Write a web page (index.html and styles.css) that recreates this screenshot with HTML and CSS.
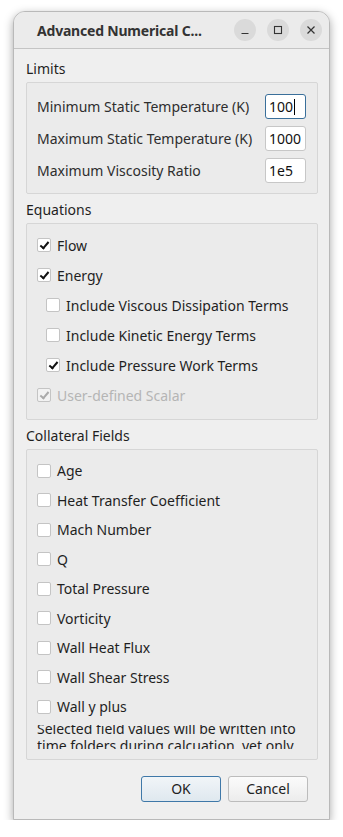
FILE: index.html
```html
<!DOCTYPE html>
<html lang="en">
<head>
    <meta charset="UTF-8">
    <meta name="viewport" content="width=device-width, initial-scale=1.0">
    <title>Advanced Numerical Controls</title>
    <link rel="stylesheet" href="styles.css">
</head>
<body>

<div class="window">
    <div class="titlebar">
        <span class="title">Advanced Numerical C...</span>
        <div class="wbtns">
            <span class="wbtn"><svg width="10" height="10" viewBox="0 0 10 10"><path d="M1.5 8.5h7" stroke="#333" stroke-width="1.2"/></svg></span>
            <span class="wbtn"><svg width="10" height="10" viewBox="0 0 10 10"><rect x="1.5" y="1.5" width="7" height="7" fill="none" stroke="#333" stroke-width="1.1"/></svg></span>
            <span class="wbtn"><svg width="10" height="10" viewBox="0 0 10 10"><path d="M1.5 1.5l7 7M8.5 1.5l-7 7" stroke="#333" stroke-width="1.2"/></svg></span>
        </div>
    </div>

    <div class="content">
        <div class="glabel">Limits</div>
        <div class="group limits">
            <div class="frow"><span>Minimum Static Temperature (K)</span><div class="field focus">100<i class="caret"></i></div></div>
            <div class="frow"><span>Maximum Static Temperature (K)</span><div class="field">1000</div></div>
            <div class="frow"><span>Maximum Viscosity Ratio</span><div class="field">1e5</div></div>
        </div>

        <div class="glabel">Equations</div>
        <div class="group checks">
            <label class="chk"><span class="box on"></span>Flow</label>
            <label class="chk"><span class="box on"></span>Energy</label>
            <label class="chk sub"><span class="box"></span>Include Viscous Dissipation Terms</label>
            <label class="chk sub"><span class="box"></span>Include Kinetic Energy Terms</label>
            <label class="chk sub"><span class="box on"></span>Include Pressure Work Terms</label>
            <label class="chk off"><span class="box on"></span>User-defined Scalar</label>
        </div>

        <div class="glabel">Collateral Fields</div>
        <div class="group checks fields">
            <label class="chk"><span class="box"></span>Age</label>
            <label class="chk"><span class="box"></span>Heat Transfer Coefficient</label>
            <label class="chk"><span class="box"></span>Mach Number</label>
            <label class="chk"><span class="box"></span>Q</label>
            <label class="chk"><span class="box"></span>Total Pressure</label>
            <label class="chk"><span class="box"></span>Vorticity</label>
            <label class="chk"><span class="box"></span>Wall Heat Flux</label>
            <label class="chk"><span class="box"></span>Wall Shear Stress</label>
            <label class="chk"><span class="box"></span>Wall y plus</label>
            <div class="note"><p>Selected field values will be written into time folders during calcuation, yet only</p></div>
        </div>

        <div class="buttons">
            <button class="btn default">OK</button>
            <button class="btn">Cancel</button>
        </div>
    </div>
</div>

</body>
</html>
```

FILE: styles.css
```css
body {
    margin: 0;
    background: #ffffff;
    font-family: "Noto Sans", "Open Sans", sans-serif;
    color: #2e2e2e;
}

.window {
    margin: 11px 0 0 13px;
    width: 315px;
    height: 807px;
    border: 1px solid #b9b9b9;
    border-radius: 12px 12px 0 0;
    background: #efefef;
    box-shadow: 0 3px 10px rgba(0, 0, 0, 0.35);
    overflow: hidden;
}

.titlebar {
    height: 36px;
    background: #ebebeb;
    border-bottom: 1px solid #c4c4c4;
    display: flex;
    align-items: center;
    justify-content: space-between;
    padding: 0 7px 0 23px;
}

.title {
    font-weight: bold;
    font-size: 14px;
    letter-spacing: -0.2px;
    color: #333;
}

.wbtns {
    display: flex;
    gap: 11px;
}

.wbtn {
    width: 22px;
    height: 22px;
    border-radius: 50%;
    background: #dadada;
    display: flex;
    align-items: center;
    justify-content: center;
}

.content {
    padding: 11px 11px 0 12px;
    font-size: 14px;
}

.glabel {
    height: 18px;
    line-height: 18px;
    margin-bottom: 4px;
    color: #1f1f1f;
}

.group {
    border: 1px solid #d6d6d6;
    border-radius: 2px;
    background: #ebebeb;
    margin-bottom: 7px;
}

.limits {
    padding: 11px 11px 10px 10px;
    display: flex;
    flex-direction: column;
    gap: 7px;
}

.frow {
    display: flex;
    justify-content: space-between;
    align-items: center;
}

.field {
    width: 36px;
    height: 23px;
    line-height: 23px;
    padding-left: 3px;
    background: #fff;
    border: 1px solid #c7c7c7;
    border-radius: 3px;
    color: #111;
}

.field.focus {
    border-color: #3a6f9a;
}

.caret {
    display: inline-block;
    width: 1px;
    height: 16px;
    background: #000;
    vertical-align: -3px;
    margin-left: 1px;
}

.checks {
    padding: 6px 10px 9px;
    display: flex;
    flex-direction: column;
}

.chk {
    height: 30px;
    display: flex;
    align-items: center;
    gap: 6px;
    color: #1f1f1f;
}

.chk.sub {
    padding-left: 9px;
}

.chk.off {
    color: #b5b5b5;
}

.box {
    width: 12px;
    height: 12px;
    border: 1px solid #c4c4c4;
    border-radius: 2px;
    background: #fff;
    position: relative;
}

.box.on::after {
    content: "";
    position: absolute;
    left: 4px;
    top: 1px;
    width: 3px;
    height: 7px;
    border: solid #111;
    border-width: 0 2px 2px 0;
    transform: rotate(40deg);
}

.chk.off .box {
    background: #f2f2f2;
}

.chk.off .box.on::after {
    border-color: #aaa;
}

.fields {
    padding: 6px 10px 10px;
}

.fields .chk {
    height: 29.5px;
}

.note {
    margin-top: 3px;
    height: 24px;
    overflow: hidden;
}

.note p {
    margin: -5px 0 0;
    line-height: 17px;
    font-size: 14px;
    color: #1f1f1f;
}

.buttons {
    display: flex;
    justify-content: flex-end;
    gap: 7px;
    padding-top: 9px;
    padding-right: 10px;
}

.btn {
    width: 80px;
    height: 26px;
    font-family: inherit;
    font-size: 14px;
    color: #222;
    background: linear-gradient(#fbfbfb, #ececec);
    border: 1px solid #bcbcbc;
    border-radius: 3px;
}

.btn.default {
    border-color: #3f78a8;
    background: linear-gradient(#f1f5f8, #dfe8ef);
}
```
